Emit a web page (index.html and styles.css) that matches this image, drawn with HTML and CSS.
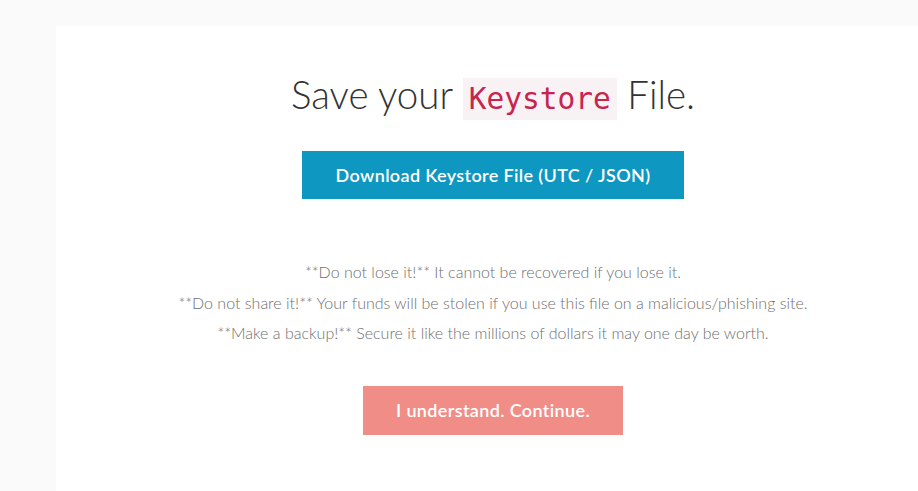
FILE: index.html
```html
<html>
<head>
<meta charset="UTF-8">
<link rel="stylesheet" href="styles.css">
</head>
<body>
<div class="page">
    <div class="card">
        <h1 class="title">Save your <code>Keystore</code> File.</h1>
        <button class="btn btn-download">Download Keystore File (UTC / JSON)</button>
        <div class="notes">
            <p>**Do not lose it!** It cannot be recovered if you lose it.</p>
            <p>**Do not share it!** Your funds will be stolen if you use this file on a malicious/phishing site.</p>
            <p>**Make a backup!** Secure it like the millions of dollars it may one day be worth.</p>
        </div>
        <button class="btn btn-continue">I understand. Continue.</button>
    </div>
</div>
</body>
</html>
```

FILE: styles.css
```css
html, body {
    margin: 0;
    padding: 0;
    background: #fafafa;
    font-family: Lato, "Open Sans", sans-serif;
    overflow: hidden;
}

.page {
    padding-top: 26px;
    padding-left: 56px;
}

.card {
    background: #ffffff;
    height: 465px;
    padding-left: 12px;
    padding-top: 1px;
    display: flex;
    flex-direction: column;
    align-items: center;
}

.title {
    font-weight: 300;
    font-size: 38.5px;
    color: #333333;
    margin: 44px 0 0 0;
    line-height: 1.2;
}

.title code {
    font-family: "DejaVu Sans Mono", "Liberation Mono", monospace;
    font-size: 29.5px;
    color: #c7254e;
    background: #f9f2f4;
    padding: 4px 6px;
    font-weight: 400;
}

.btn {
    border: none;
    color: #ffffff;
    font-family: Lato, sans-serif;
    font-weight: 600;
    font-size: 18px;
    letter-spacing: 0.02em;
    cursor: pointer;
}

.btn-download {
    background: #0e97c1;
    width: 382px;
    height: 48px;
    margin-top: 34px;
}

.notes {
    margin-top: 58px;
    text-align: center;
    color: #6f6f6f;
    font-weight: 300;
    font-size: 16px;
}

.notes p {
    margin: 0;
    line-height: 30.5px;
}

.btn-continue {
    background: #f08d86;
    width: 260px;
    height: 49px;
    margin-top: 37px;
}
```
